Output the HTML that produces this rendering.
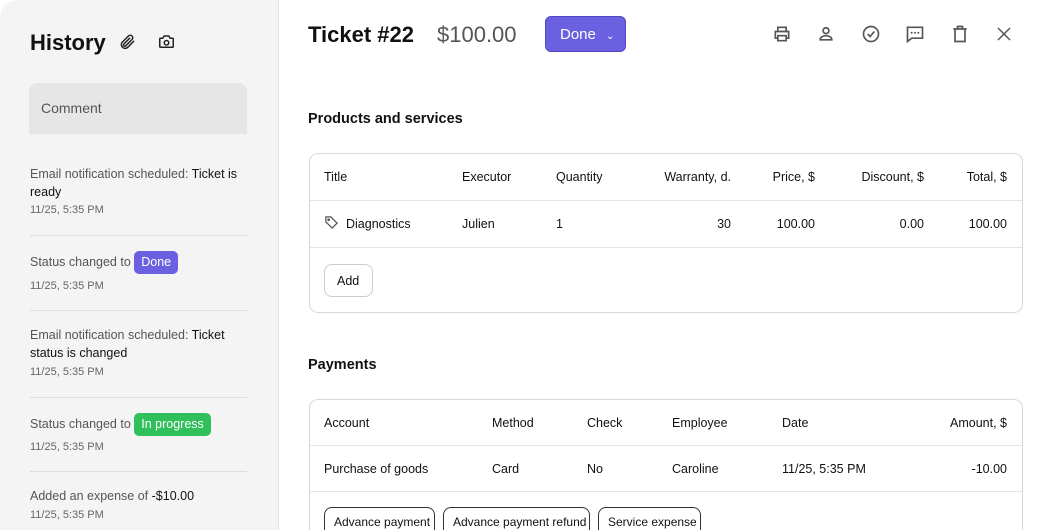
<!DOCTYPE html>
<html style="width:1048px;height:530px;overflow:hidden"><head><meta charset="utf-8"><style>
*{box-sizing:border-box;margin:0;padding:0}
body{width:1048px;height:530px;overflow:hidden;background:#fff;font-family:"Liberation Sans",sans-serif;color:#111;position:relative}
.left{position:absolute;left:0;top:0;width:279px;height:530px;background:#f4f4f5;border-right:1px solid #e2e2e4;border-top-left-radius:18px}
.abs{position:absolute;white-space:nowrap}
.h{font-size:22px;font-weight:bold;left:30px;top:30px}
.cm{left:29px;top:83px;width:218px;height:51px;background:#e6e6e7;border-radius:8px 8px 0 0;font-size:14px;color:#555;padding:17px 12px}
.e{font-size:12.5px;color:#555;line-height:18px;left:30px;width:220px;white-space:normal}
.e b{font-weight:normal;color:#111}
.d{font-size:11px;color:#666;left:30px}
.sep{left:30px;width:217px;height:1px;background:#ddd}
.badge{display:inline-block;color:#fff;border-radius:5px;padding:3px 7px;font-size:12.5px;line-height:17px}
.t{font-size:22px;font-weight:bold;left:308px;top:22px}
.p{font-size:22px;color:#555;left:437px;top:22px}
.btn{left:545px;top:16px;width:81px;height:36px;background:#6b61e0;border:1px solid #5048c0;border-radius:6px;color:#fff;font-size:15px;padding:9px 0 0 14px}
.sec{font-size:14.5px;font-weight:bold;left:308px}
.tbl{left:309px;width:714px;border:1px solid #d8d8d8;border-radius:9px}
.c{font-size:12.5px}
.hl{left:310px;width:712px;height:1px;background:#e4e4e4}
.ob{border:1px solid #333;border-bottom:none;border-radius:8px 8px 0 0;font-size:12px;background:#fff;height:23px}
svg{position:absolute}
</style></head><body>
<div class="left"></div>
<div class="abs h">History</div>
<svg style="left:118px;top:33px" width="18" height="18" viewBox="0 0 24 24" fill="none" stroke="#222" stroke-width="2" stroke-linecap="round"><path d="M21 11l-8.5 8.5a5 5 0 0 1-7-7L14 4a3.3 3.3 0 0 1 4.7 4.7L10.2 17.2a1.7 1.7 0 0 1-2.4-2.4L15.5 7"/></svg>
<svg style="left:157px;top:33px" width="19" height="18" viewBox="0 0 24 24" fill="none" stroke="#222" stroke-width="2"><path d="M4 7h3l2-3h6l2 3h3a1 1 0 0 1 1 1v10a1 1 0 0 1-1 1H4a1 1 0 0 1-1-1V8a1 1 0 0 1 1-1z"/><circle cx="12" cy="13" r="3"/></svg>
<div class="abs cm">Comment</div>
<div class="abs e" style="top:165px">Email notification scheduled: <b>Ticket is ready</b></div>
<div class="abs d" style="top:204px">11/25, 5:35 PM</div>
<div class="abs sep" style="top:235px"></div>
<div class="abs e" style="top:251px">Status changed to <span class="badge" style="background:#6b61e0">Done</span></div>
<div class="abs d" style="top:280px">11/25, 5:35 PM</div>
<div class="abs sep" style="top:310px"></div>
<div class="abs e" style="top:326px">Email notification scheduled: <b>Ticket status is changed</b></div>
<div class="abs d" style="top:366px">11/25, 5:35 PM</div>
<div class="abs sep" style="top:397px"></div>
<div class="abs e" style="top:413px">Status changed to <span class="badge" style="background:#2fbf5b">In progress</span></div>
<div class="abs d" style="top:441px">11/25, 5:35 PM</div>
<div class="abs sep" style="top:471px"></div>
<div class="abs e" style="top:487px">Added an expense of <b>-$10.00</b></div>
<div class="abs d" style="top:509px">11/25, 5:35 PM</div>

<div class="abs t">Ticket #22</div>
<div class="abs p">$100.00</div>
<div class="abs btn">Done <span style="font-size:10px;margin-left:6px">&#8964;</span></div>
<svg style="left:772px;top:24px" width="20" height="20" viewBox="0 0 24 24" fill="none" stroke="#555" stroke-width="2"><path d="M7 8V4h10v4M7 17H4V9h16v8h-3M7 14h10v6H7z"/></svg>
<svg style="left:816px;top:24px" width="20" height="20" viewBox="0 0 24 24" fill="none" stroke="#555" stroke-width="2"><circle cx="12" cy="8" r="3.5"/><path d="M5 19c0-3 3-5 7-5s7 2 7 5z"/></svg>
<svg style="left:861px;top:24px" width="20" height="20" viewBox="0 0 24 24" fill="none" stroke="#555" stroke-width="2"><circle cx="12" cy="12" r="9"/><path d="M8 12l3 3 5-6"/></svg>
<svg style="left:905px;top:24px" width="20" height="20" viewBox="0 0 24 24" fill="none" stroke="#555" stroke-width="2"><path d="M3 4h18v13H8l-5 4z"/><path d="M8 10.5h.01M12 10.5h.01M16 10.5h.01" stroke-width="2.5" stroke-linecap="round"/></svg>
<svg style="left:950px;top:24px" width="20" height="20" viewBox="0 0 24 24" fill="none" stroke="#555" stroke-width="2"><path d="M4 6h16M9 6V3h6v3M6 6v15h12V6"/></svg>
<svg style="left:995px;top:25px" width="18" height="18" viewBox="0 0 24 24" fill="none" stroke="#555" stroke-width="2"><path d="M4 4l16 16M20 4L4 20"/></svg>

<div class="abs sec" style="top:111px">Products and services</div>
<div class="abs tbl" style="top:153px;height:160px"></div>
<div class="abs hl" style="top:200px"></div>
<div class="abs hl" style="top:247px"></div>
<div class="abs c" style="left:324px;top:170px">Title</div>
<div class="abs c" style="left:462px;top:170px">Executor</div>
<div class="abs c" style="left:556px;top:170px">Quantity</div>
<div class="abs c" style="right:317px;top:170px">Warranty, d.</div>
<div class="abs c" style="right:233px;top:170px">Price, $</div>
<div class="abs c" style="right:124px;top:170px">Discount, $</div>
<div class="abs c" style="right:41px;top:170px">Total, $</div>
<svg style="left:324px;top:215px" width="15" height="15" viewBox="0 0 24 24" fill="none" stroke="#555" stroke-width="2"><path d="M3 3h8l10 10-8 8L3 11z"/><circle cx="7.5" cy="7.5" r="1.2"/></svg>
<div class="abs c" style="left:346px;top:217px">Diagnostics</div>
<div class="abs c" style="left:462px;top:217px">Julien</div>
<div class="abs c" style="left:556px;top:217px">1</div>
<div class="abs c" style="right:317px;top:217px">30</div>
<div class="abs c" style="right:233px;top:217px">100.00</div>
<div class="abs c" style="right:124px;top:217px">0.00</div>
<div class="abs c" style="right:41px;top:217px">100.00</div>
<div class="abs" style="left:324px;top:264px;width:49px;height:33px;border:1px solid #ccc;border-radius:8px;font-size:12.5px;padding:9px 0 0 12px">Add</div>

<div class="abs sec" style="top:357px">Payments</div>
<div class="abs tbl" style="top:399px;height:131px;border-bottom:none;border-radius:9px 9px 0 0"></div>
<div class="abs hl" style="top:445px"></div>
<div class="abs hl" style="top:491px"></div>
<div class="abs c" style="left:324px;top:416px">Account</div>
<div class="abs c" style="left:492px;top:416px">Method</div>
<div class="abs c" style="left:587px;top:416px">Check</div>
<div class="abs c" style="left:672px;top:416px">Employee</div>
<div class="abs c" style="left:782px;top:416px">Date</div>
<div class="abs c" style="right:41px;top:416px">Amount, $</div>
<div class="abs c" style="left:324px;top:462px">Purchase of goods</div>
<div class="abs c" style="left:492px;top:462px">Card</div>
<div class="abs c" style="left:587px;top:462px">No</div>
<div class="abs c" style="left:672px;top:462px">Caroline</div>
<div class="abs c" style="left:782px;top:462px">11/25, 5:35 PM</div>
<div class="abs c" style="right:41px;top:462px">-10.00</div>
<div class="abs ob" style="left:324px;top:507px;width:111px;padding:7px 0 0 9px">Advance payment</div>
<div class="abs ob" style="left:443px;top:507px;width:147px;padding:7px 0 0 9px">Advance payment refund</div>
<div class="abs ob" style="left:598px;top:507px;width:103px;padding:7px 0 0 9px">Service expense</div>
</body></html>
